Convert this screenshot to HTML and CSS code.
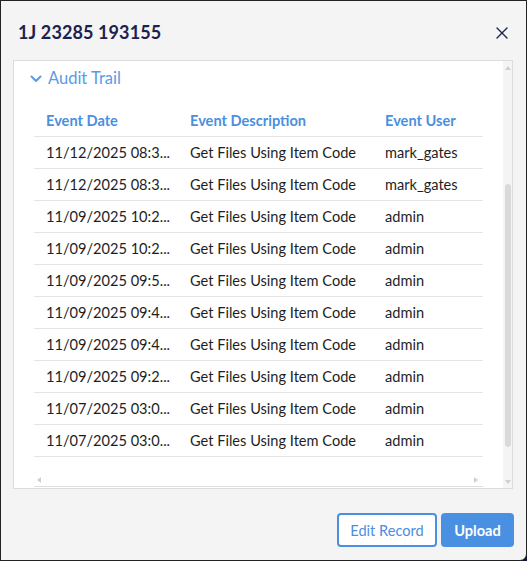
FILE: index.html
```html
<!DOCTYPE html>
<html lang="en">
<head>
<meta charset="utf-8">
<title>1J 23285 193155</title>
<link rel="stylesheet" href="styles.css">
</head>
<body>
<div class="dialog">
  <div class="dialog-header">
    <h1 class="dialog-title">1J 23285 193155</h1>
    <button class="close-btn" aria-label="Close">
      <svg width="12" height="12" viewBox="0 0 12 12"><path d="M1 1 L11 11 M11 1 L1 11" stroke="#1c2452" stroke-width="1.4" fill="none" stroke-linecap="round"/></svg>
    </button>
  </div>

  <div class="panel">
    <div class="panel-content">
      <div class="section-title">
        <svg class="chevron" width="12" height="8" viewBox="0 0 12 8"><path d="M1.5 1.5 L6 6 L10.5 1.5" stroke="#5a9be6" stroke-width="2" fill="none" stroke-linecap="round" stroke-linejoin="round"/></svg>
        <span>Audit Trail</span>
      </div>
      <div class="table-wrap">
        <table class="audit-table">
          <colgroup>
            <col class="c-date"><col class="c-desc"><col class="c-user">
          </colgroup>
          <thead>
            <tr><th>Event Date</th><th>Event Description</th><th>Event User</th></tr>
          </thead>
          <tbody>
            <tr><td>11/12/2025 08:3...</td><td>Get Files Using Item Code</td><td>mark_gates</td></tr>
            <tr><td>11/12/2025 08:3...</td><td>Get Files Using Item Code</td><td>mark_gates</td></tr>
            <tr><td>11/09/2025 10:2...</td><td>Get Files Using Item Code</td><td>admin</td></tr>
            <tr><td>11/09/2025 10:2...</td><td>Get Files Using Item Code</td><td>admin</td></tr>
            <tr><td>11/09/2025 09:5...</td><td>Get Files Using Item Code</td><td>admin</td></tr>
            <tr><td>11/09/2025 09:4...</td><td>Get Files Using Item Code</td><td>admin</td></tr>
            <tr><td>11/09/2025 09:4...</td><td>Get Files Using Item Code</td><td>admin</td></tr>
            <tr><td>11/09/2025 09:2...</td><td>Get Files Using Item Code</td><td>admin</td></tr>
            <tr><td>11/07/2025 03:0...</td><td>Get Files Using Item Code</td><td>admin</td></tr>
            <tr><td>11/07/2025 03:0...</td><td>Get Files Using Item Code</td><td>admin</td></tr>
          </tbody>
        </table>
        <div class="hscroll">
          <span class="arrow arrow-left"></span>
          <span class="arrow arrow-right"></span>
        </div>
      </div>
    </div>
    <div class="vscroll">
      <span class="arrow arrow-up"></span>
      <div class="vtrack"><div class="vthumb"></div></div>
      <span class="arrow arrow-down"></span>
    </div>
  </div>

  <div class="dialog-footer">
    <button class="btn btn-outline">Edit Record</button>
    <button class="btn btn-primary">Upload</button>
  </div>
</div>
</body>
</html>
```

FILE: styles.css
```css
* { box-sizing: border-box; }
html, body { margin: 0; padding: 0; }
body {
  background: #0d1a33;
  font-family: "Lato", "Noto Sans", sans-serif;
  width: 527px;
  height: 561px;
  overflow: hidden;
}
.dialog {
  width: 527px;
  height: 561px;
  background: #f4f4f4;
  border: 1px solid #222;
  border-bottom-right-radius: 7px;
  display: flex;
  flex-direction: column;
}
.dialog-header {
  display: flex;
  align-items: center;
  justify-content: space-between;
  padding: 19px 17px 0 17px;
  height: 43px;
}
.dialog-title {
  margin: 0;
  font-size: 18px;
  line-height: 24px;
  font-weight: 700;
  color: #1b2250;
  letter-spacing: 0.1px;
}
.close-btn {
  border: 0;
  background: transparent;
  padding: 0;
  width: 14px;
  height: 14px;
  display: flex;
  align-items: center;
  justify-content: center;
  margin-top: 2px;
}
.panel {
  margin: 16px 13px 0 12px;
  height: 429px;
  background: #fff;
  border: 1px solid #dcdcdc;
  display: flex;
}
.panel-content {
  flex: 1;
  display: flex;
  flex-direction: column;
  padding: 6px 20px 0 20px;
}
.section-title {
  display: flex;
  align-items: center;
  height: 22px;
  color: #5a9be6;
  font-size: 16.5px;
  margin-left: -4px;
}
.chevron { margin-right: 6px; margin-top: 1px; }
.table-wrap {
  margin-top: 16px;
  flex: 1;
  display: flex;
  flex-direction: column;
  border-bottom: 1px solid #dedede;
  margin-bottom: 1px;
}
.audit-table {
  width: 449px;
  border-collapse: collapse;
  table-layout: fixed;
  font-size: 14.6px;
}
.c-date { width: 144px; }
.c-desc { width: 195px; }
.c-user { width: 110px; }
.audit-table th,
.audit-table td {
  text-align: left;
  padding: 0 0 0 12px;
  height: 32px;
  border-bottom: 1px solid #e4e4e4;
  white-space: nowrap;
  overflow: hidden;
  text-overflow: ellipsis;
}
.audit-table th {
  color: #4a8fe0;
  font-weight: 700;
  height: 31px;
}
.audit-table td {
  color: #1e1e1e;
}
.hscroll {
  margin-top: auto;
  height: 11px;
  display: flex;
  align-items: center;
  justify-content: space-between;
  padding: 0 5px 1px 3px;
}
.arrow {
  display: block;
  width: 0;
  height: 0;
  border-style: solid;
}
.arrow-left {
  border-width: 3px 4px 3px 0;
  border-color: transparent #cfcfcf transparent transparent;
}
.arrow-right {
  border-width: 3px 0 3px 4px;
  border-color: transparent transparent transparent #cfcfcf;
}
.vscroll {
  width: 9px;
  background: #f4f4f4;
  display: flex;
  flex-direction: column;
  align-items: center;
  padding: 5px 0 4px;
}
.arrow-up {
  border-width: 0 3.5px 4px 3.5px;
  border-color: transparent transparent #cfcfcf transparent;
}
.arrow-down {
  border-width: 4px 3.5px 0 3.5px;
  border-color: #cfcfcf transparent transparent transparent;
}
.vtrack {
  flex: 1;
  width: 100%;
  padding: 0 1px;
  margin: 4px 0;
  display: flex;
  flex-direction: column;
}
.vthumb {
  margin-top: 110px;
  height: 263px;
  width: 6px;
  margin-left: 1px;
  background: #dadada;
  border-radius: 3px;
}
.dialog-footer {
  display: flex;
  justify-content: flex-end;
  gap: 4px;
  padding: 24px 12px 0 0;
}
.btn {
  font-family: inherit;
  font-size: 14.6px;
  height: 34px;
  border-radius: 4px;
  padding: 0;
  cursor: pointer;
}
.btn-outline {
  width: 100px;
  background: #fff;
  color: #4a8fe0;
  border: 2px solid #4a8fe0;
}
.btn-primary {
  width: 73px;
  background: #4a90e2;
  color: #fff;
  font-weight: 700;
  border: 0;
}
```
